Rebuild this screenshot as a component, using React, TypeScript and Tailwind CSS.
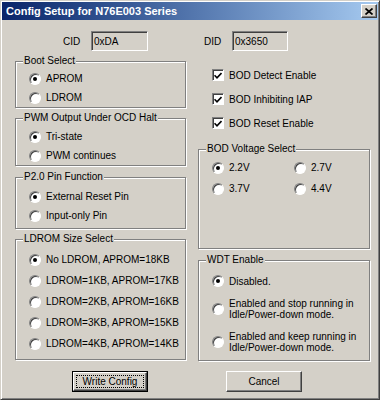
import React from "react";

function Radio({ checked }: { checked?: boolean }) {
  return (
    <span className="flex size-[12px] shrink-0 items-center justify-center rounded-full border border-t-[#808080] border-l-[#808080] border-r-white border-b-white bg-white shadow-[inset_1px_1px_0_#404040]">
      {checked && <span className="size-[4px] rounded-full bg-black" />}
    </span>
  );
}

function Check() {
  return (
    <span className="flex size-[12px] shrink-0 items-center justify-center border border-t-[#808080] border-l-[#808080] border-r-white border-b-white bg-white shadow-[inset_1px_1px_0_#404040]">
      <svg width="8" height="7" viewBox="0 0 8 7">
        <path d="M0.5 3.2 L3 5.8 L7.5 1" fill="none" stroke="#000" strokeWidth="1.6" />
      </svg>
    </span>
  );
}

function Group({
  title,
  className,
  children,
}: {
  title: string;
  className: string;
  children?: React.ReactNode;
}) {
  return (
    <div className={`relative border border-[#808080] shadow-[inset_1px_1px_0_#fff,1px_1px_0_#fff] ${className}`}>
      <span className="absolute -top-[7px] left-[7px] bg-[#d4d0c8] px-[1px] leading-[12px]">{title}</span>
      {children}
    </div>
  );
}

function Option({ label, checked, h }: { label: string; checked?: boolean; h: string }) {
  return (
    <div className={`flex items-center gap-[5px] ${h}`}>
      <Radio checked={checked} />
      <span>{label}</span>
    </div>
  );
}

export default function App() {
  const ldrom = [
    "No LDROM, APROM=18KB",
    "LDROM=1KB, APROM=17KB",
    "LDROM=2KB, APROM=16KB",
    "LDROM=3KB, APROM=15KB",
    "LDROM=4KB, APROM=14KB",
  ];

  return (
    <div className="h-[402px] w-[382px] bg-white font-['Liberation_Sans',Arial,sans-serif] text-[10px] text-black">
      <div className="flex h-[400px] w-[380px] flex-col border border-t-[#d4d0c8] border-l-[#d4d0c8] border-r-[#404040] border-b-[#404040] bg-[#d4d0c8] p-[1px] shadow-[inset_1px_1px_0_#fff,inset_-1px_-1px_0_#808080]">
        {/* Title bar */}
        <div className="flex h-[18px] items-center justify-between bg-linear-to-r from-[#0a246a] to-[#a6caf0] pl-[4px] pr-[1px]">
          <span className="text-[11px] font-bold text-white">Config Setup for N76E003 Series</span>
          <div className="flex h-[14px] w-[16px] items-center justify-center border border-t-white border-l-white border-r-[#404040] border-b-[#404040] bg-[#d4d0c8] shadow-[inset_-1px_-1px_0_#808080]">
            <svg width="8" height="7" viewBox="0 0 8 7">
              <path d="M0.5 0.5 L7.5 6.5 M7.5 0.5 L0.5 6.5" stroke="#000" strokeWidth="1.7" />
            </svg>
          </div>
        </div>

        {/* CID / DID */}
        <div className="mt-[11px] flex h-[20px] items-center">
          <span className="ml-[61px] w-[28px]">CID</span>
          <div className="flex h-[20px] w-[57px] items-center border border-t-[#808080] border-l-[#808080] border-r-white border-b-white pl-[2px] shadow-[inset_1px_1px_0_#404040]">
            0xDA
          </div>
          <span className="ml-[56px] w-[28px]">DID</span>
          <div className="flex h-[20px] w-[56px] items-center border border-t-[#808080] border-l-[#808080] border-r-white border-b-white pl-[2px] shadow-[inset_1px_1px_0_#404040]">
            0x3650
          </div>
        </div>

        <div className="flex">
          {/* Left column */}
          <div className="ml-[13px] flex w-[171px] flex-col">
            <Group title="Boot Select" className="mt-[10px] h-[47px] pl-[13px] pt-[7px]">
              <Option label="APROM" checked h="h-[19px]" />
              <Option label="LDROM" h="h-[19px]" />
            </Group>
            <Group title="PWM Output Under OCD Halt" className="mt-[10px] h-[48px] pl-[13px] pt-[8px]">
              <Option label="Tri-state" checked h="h-[19px]" />
              <Option label="PWM continues" h="h-[19px]" />
            </Group>
            <Group title="P2.0 Pin Function" className="mt-[11px] h-[52px] pl-[13px] pt-[9px]">
              <Option label="External Reset Pin" checked h="h-[19px]" />
              <Option label="Input-only Pin" h="h-[19px]" />
            </Group>
            <Group title="LDROM Size Select" className="mt-[10px] h-[121px] pl-[13px] pt-[9px]">
              {ldrom.map((l, i) => (
                <Option key={l} label={l} checked={i === 0} h="h-[21px]" />
              ))}
            </Group>
          </div>

          {/* Right column */}
          <div className="ml-[12px] flex w-[172px] flex-col">
            <div className="mt-[12px] flex flex-col gap-0 pl-[14px]">
              {["BOD Detect Enable", "BOD Inhibiting IAP", "BOD Reset Enable"].map((t) => (
                <div key={t} className="flex h-[24px] items-center gap-[5px]">
                  <Check />
                  <span>{t}</span>
                </div>
              ))}
            </div>
            <Group title="BOD Voltage Select" className="mt-[14px] h-[100px] pl-[13px] pt-[7px]">
              <div className="grid grid-cols-[82px_82px]">
                <Option label="2.2V" checked h="h-[21px]" />
                <Option label="2.7V" h="h-[21px]" />
                <Option label="3.7V" h="h-[21px]" />
                <Option label="4.4V" h="h-[21px]" />
              </div>
            </Group>
            <Group title="WDT Enable" className="mt-[11px] h-[101px] pl-[13px] pt-[10px]">
              <Option label="Disabled." checked h="h-[20px]" />
              <div className="mt-[7px] flex items-center gap-[5px]">
                <Radio />
                <span className="leading-[11px]">
                  Enabled and stop running in
                  <br />
                  Idle/Power-down mode.
                </span>
              </div>
              <div className="mt-[11px] flex items-center gap-[5px]">
                <Radio />
                <span className="leading-[11px]">
                  Enabled and keep running in
                  <br />
                  Idle/Power-down mode.
                </span>
              </div>
            </Group>
          </div>
        </div>

        {/* Buttons */}
        <div className="mt-[10px] flex">
          <div className="ml-[70px] flex h-[21px] w-[76px] border border-black">
            <div className="flex flex-1 items-center justify-center border border-t-white border-l-white border-r-[#404040] border-b-[#404040] p-[2px] shadow-[inset_-1px_-1px_0_#808080]">
              <span className="flex h-full w-full items-center justify-center border border-dotted border-black">
                Write Config
              </span>
            </div>
          </div>
          <div className="ml-[78px] flex h-[21px] w-[76px] items-center justify-center border border-t-white border-l-white border-r-[#404040] border-b-[#404040] shadow-[inset_-1px_-1px_0_#808080]">
            Cancel
          </div>
        </div>
      </div>
    </div>
  );
}
